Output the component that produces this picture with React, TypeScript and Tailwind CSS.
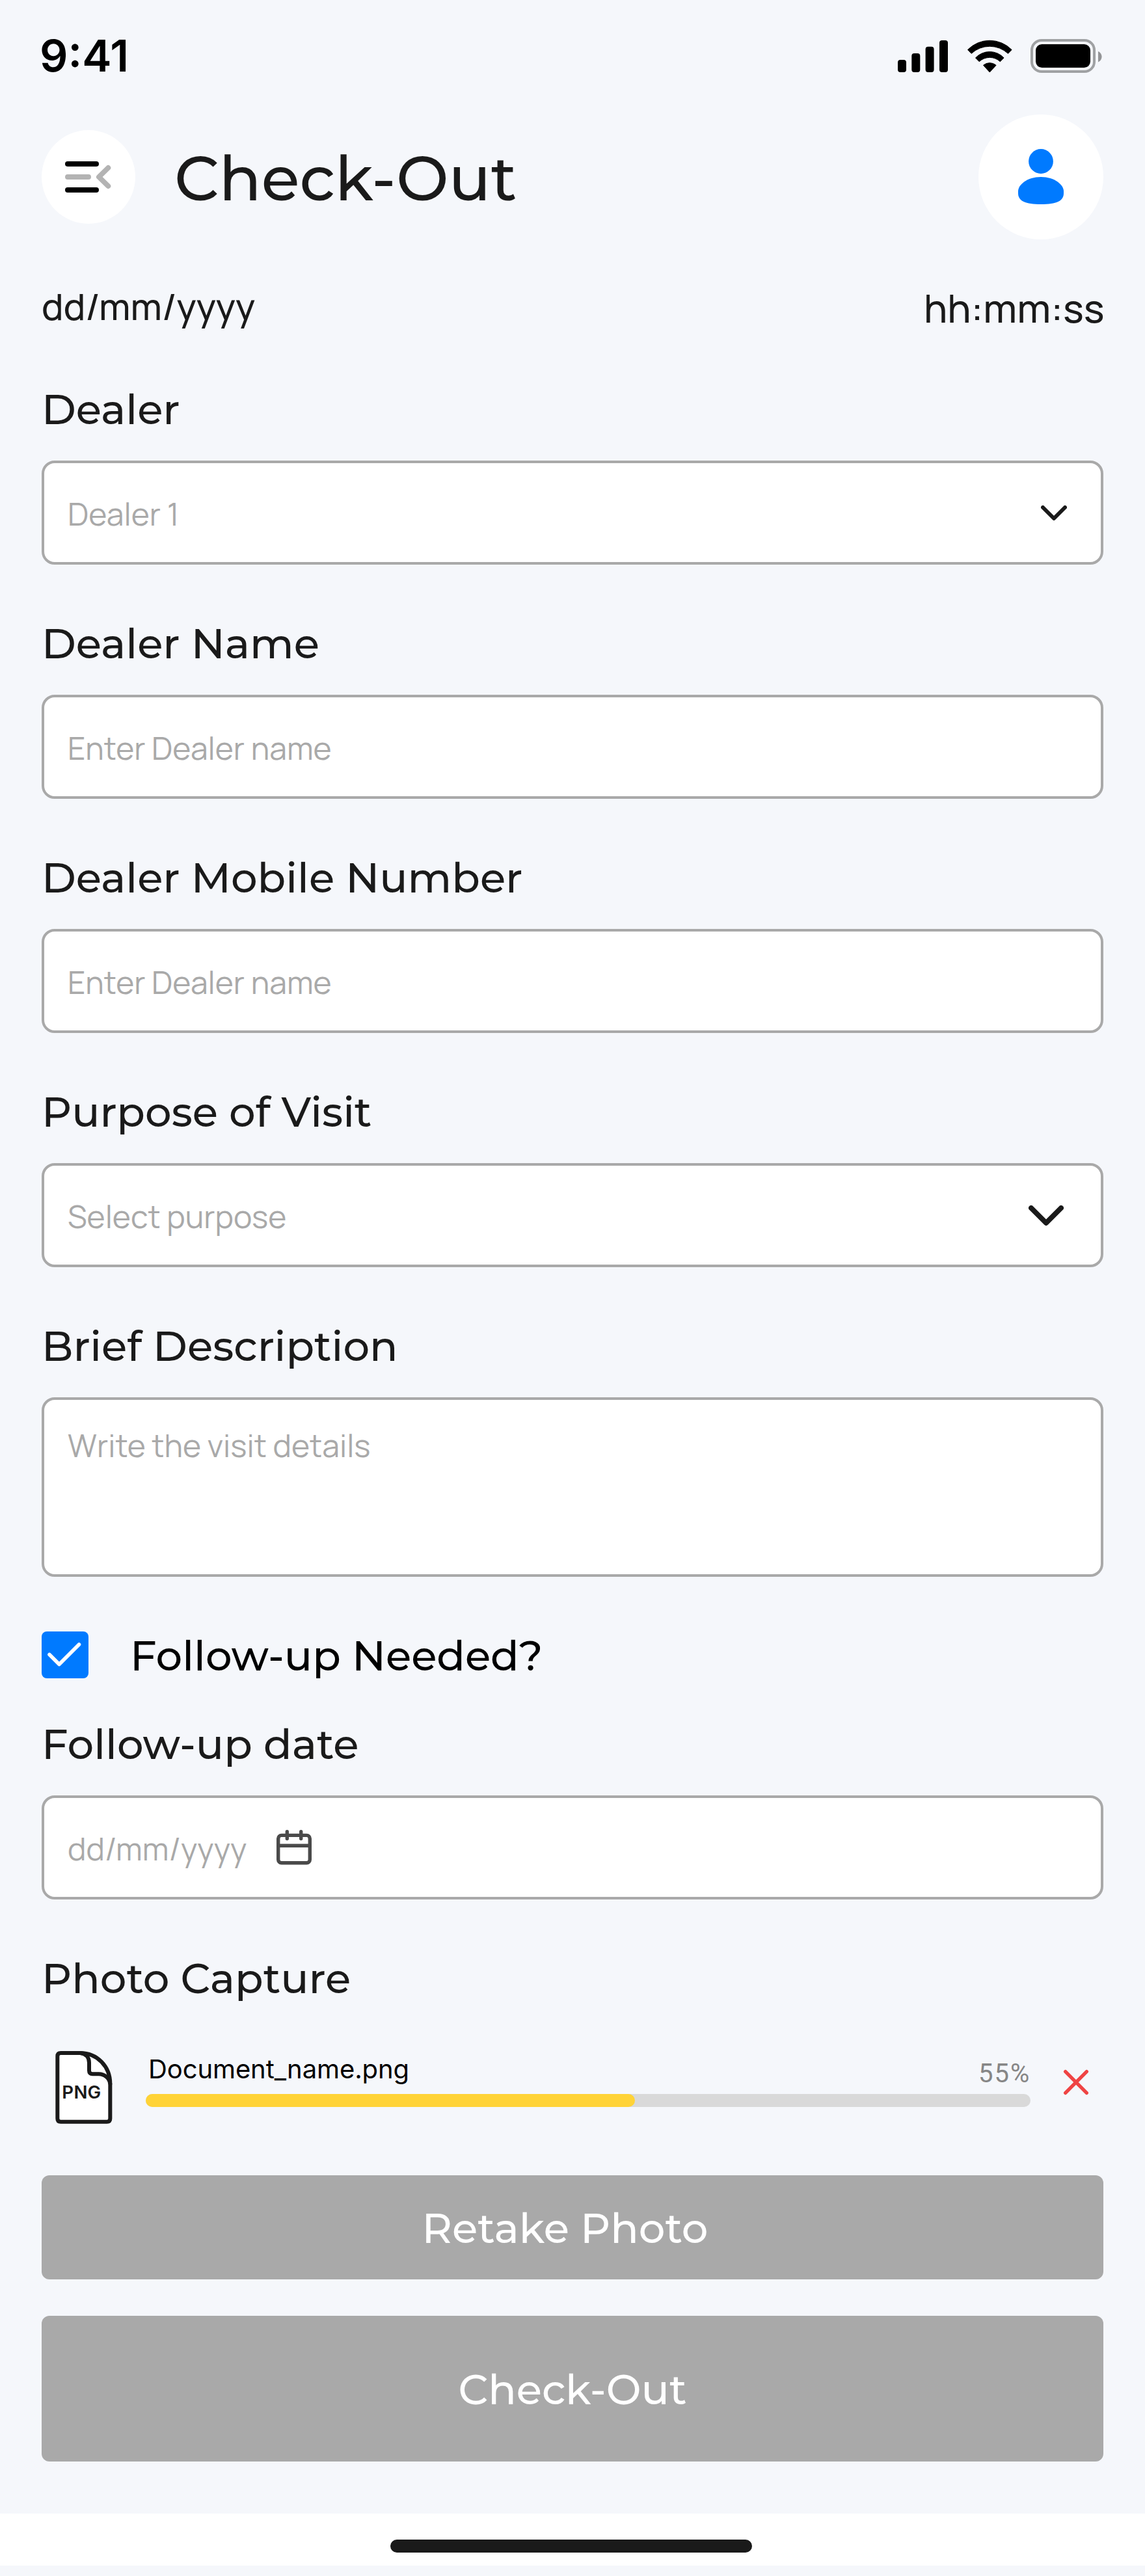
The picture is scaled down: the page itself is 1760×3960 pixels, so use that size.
import type { ReactNode } from "react";

const FONT_MONT = "font-['Montserrat','Inter',sans-serif]";
const FONT_MANROPE = "font-['Manrope','Inter',sans-serif]";

function StatusBar() {
  return (
    <div className="flex h-[176px] items-start justify-between pr-[64px] pl-[61px]">
      <span className="mt-[44px] font-['Inter',sans-serif] text-[68px] leading-[82px] font-semibold text-black">9:41</span>
      <svg className="mt-[60px]" width="316" height="54" viewBox="0 0 316 54">
        <rect x="0" y="32" width="13" height="19" rx="4" />
        <rect x="21.3" y="22" width="13" height="29" rx="4" />
        <rect x="42.6" y="11.7" width="13" height="39.3" rx="4" />
        <rect x="64" y="2" width="13" height="49" rx="4" />
        <g stroke="#000" strokeWidth="1" strokeLinejoin="round">
          <path d="M107.5 16.5A47.3 47.3 0 0 1 175.1 16.5L169.5 22.3A41.5 41.5 0 0 0 113.1 22.3Z" />
          <path d="M119.5 28.9A30 30 0 0 1 163.1 28.9L157.4 34.7A23.6 23.6 0 0 0 125.2 34.7Z" />
          <path d="M131.5 40.3A15 15 0 0 1 151.1 40.3L141.3 51Z" />
        </g>
        <rect x="206" y="2" width="96" height="48" rx="15" fill="none" stroke="#000" strokeOpacity="0.35" strokeWidth="4" />
        <rect x="212" y="8" width="84" height="36" rx="9.5" />
        <path d="M308 19c3.3 1.4 5.5 4.600 5.500 8.200s-2.200 6.800-5.500 8.200z" fillOpacity="0.4" />
      </svg>
    </div>
  );
}

function Header() {
  return (
    <header className="flex h-[192px] items-center">
      <button className="flex size-[144px] items-center justify-center rounded-full bg-white">
        <svg width="72" height="48" viewBox="0 0 72 48" fill="none" strokeWidth="8" strokeLinecap="round" strokeLinejoin="round">
          <path d="M4 4H48M4 44H48" stroke="#000" />
          <path d="M4 24H36M66.300 10L52 24L66.300 38" stroke="#b3b3b3" />
        </svg>
      </button>
      <h1 className={`${FONT_MONT} ml-[60px] pt-[3px] text-[96px] leading-[117px] font-medium text-[#1a1a1a]`}>Check-Out</h1>
      <button className="ml-auto flex size-[192px] items-center justify-center rounded-full bg-white">
        <svg width="70" height="86" viewBox="0 0 70 86" fill="#007aff">
          <circle cx="35" cy="19" r="18.900" />
          <path d="M0 65C0 55 14 43 35 43S70 55 70 65V68C70 80 59 85 35 85S0 80 0 68Z" />
        </svg>
      </button>
    </header>
  );
}

function Label({ children, className = "text-[#1a1a1a]" }: { children: ReactNode; className?: string }) {
  return <div className={`${FONT_MONT} text-[64px] leading-[78px] font-medium ${className}`}>{children}</div>;
}

function Field({ label, placeholder, children, tall = false }: { label: string; placeholder: string; children?: ReactNode; tall?: boolean }) {
  return (
    <div className="flex flex-col gap-[40px]">
      <Label>{label}</Label>
      <div className={`flex items-start rounded-[20px] border-4 border-[#a9a9a9] bg-white pl-[36px] ${tall ? "h-[276px] pt-[37px]" : "h-[160px]"}`}>
        <span className={`${FONT_MANROPE} text-[48px] leading-[65px] font-normal text-[#a9a9a9] ${tall ? "" : "mt-[45px]"}`}>{placeholder}</span>
        {children}
      </div>
    </div>
  );
}

function Upload() {
  return (
    <div className="flex h-[114px] items-start">
      <svg className="ml-[20px] shrink-0" width="90" height="114" viewBox="42 36 270 342">
        <g stroke="#1a1a1a" strokeWidth="18" strokeLinejoin="round" strokeLinecap="round" fill="#fff">
          <path d="M70 48H160C238 48 298 110 298 190V350Q298 365 283 365H70Q55 365 55 350V63Q55 48 70 48Z" />
          <path fill="none" d="M160 48C188 52 201 70 201 92V130C201 140 207 145 216 145H245C272 145 294 164 298 190" />
        </g>
        <text x="76" y="258" className="font-['Inter',sans-serif] text-[83px] font-semibold" fill="#1a1a1a" textLength="180">
          PNG
        </text>
      </svg>
      <div className="ml-[50px] w-[1360px] pt-[4px]">
        <div className="flex h-[63px] items-start justify-between pl-[4px]">
          <span className="font-['Inter',sans-serif] text-[40px] leading-[49px] tracking-[-0.1px] text-black">Document_name.png</span>
          <span className="mt-[8px] w-[80px] font-['Roboto',sans-serif] text-[40px] leading-[47px] tracking-[2px] text-[#868686]">55%</span>
        </div>
        <div className="h-[20px] rounded-full bg-[#d9d9d9]">
          <div className="h-full w-[752px] rounded-full bg-[#ffd337]" />
        </div>
      </div>
      <svg className="mt-[25px] ml-[46px]" width="48" height="48" viewBox="0 0 48 48" stroke="#ef4444" strokeWidth="5.400" strokeLinecap="round">
        <path d="M7.700 7.700L40.300 40.300M40.300 7.700L7.700 40.300" />
      </svg>
    </div>
  );
}

export default function App() {
  return (
    <div className="h-[3960px] w-[1760px] bg-[#f5f7fb]">
      <StatusBar />
      <main className="flex flex-col px-[64px]">
        <Header />
        <div className={`${FONT_MANROPE} mt-[64px] flex h-[82px] items-start justify-between font-medium text-[#1a1a1a]`}>
          <span className="text-[56px] leading-[77px]">dd/mm/yyyy</span>
          <span className="w-[276px] text-[60px] leading-[82px] whitespace-nowrap">hh:mm:ss</span>
        </div>

        <section className="mt-[76px] flex flex-col gap-[82px]">
          <Field label="Dealer" placeholder="Dealer 1">
            <svg className="mt-[65px] mr-[52px] ml-auto" width="40" height="24" viewBox="0 0 40 24" fill="none" stroke="#1a1a1a" strokeWidth="6" strokeLinecap="round" strokeLinejoin="round">
              <path d="M3 3L20 20L37 3" />
            </svg>
          </Field>
          <Field label="Dealer Name" placeholder="Enter Dealer name" />
          <Field label="Dealer Mobile Number" placeholder="Enter Dealer name" />
          <Field label="Purpose of Visit" placeholder="Select purpose">
            <svg className="mt-[61px] mr-[57px] ml-auto" width="54" height="32" viewBox="0 0 54 32" fill="none" stroke="#1a1a1a" strokeWidth="8" strokeLinecap="round" strokeLinejoin="round">
              <path d="M4 4L27 27L50 4" />
            </svg>
          </Field>
          <Field label="Brief Description" placeholder="Write the visit details" tall />
        </section>

        <label className="mt-[82px] flex items-start gap-[64px]">
          <span className="mt-[2px] flex size-[72px] rounded-[8px] bg-[#007aff]">
            <svg width="72" height="72" viewBox="0 0 72 72" fill="none" stroke="#fff" strokeWidth="5.600" strokeLinecap="round" strokeLinejoin="round">
              <path d="M12 35.500L27 50.500L57.500 20" />
            </svg>
          </span>
          <Label className="text-black">Follow-up Needed?</Label>
        </label>

        <section className="mt-[58px] flex flex-col gap-[82px]">
          <Field label="Follow-up date" placeholder="dd/mm/yyyy">
            <svg className="mt-[48px] ml-[45px]" width="56" height="56" viewBox="0 0 56 56" fill="none" stroke="#4a4a4a" strokeWidth="5.400" strokeLinecap="round">
              <rect x="3.700" y="9.400" width="48.600" height="42.400" rx="5" />
              <path d="M4 25.300H52M17.300 3.800V14.500M38.700 3.800V14.500" />
            </svg>
          </Field>
          <Label>Photo Capture</Label>
        </section>

        <div className="mt-[72px]">
          <Upload />
        </div>

        <button className={`${FONT_MONT} mt-[78px] flex h-[160px] items-center justify-center rounded-[12px] bg-[#a9a9a9] pt-[2px] pr-[23px] text-[64px] leading-[78px] font-medium text-white`}>
          Retake Photo
        </button>
        <button className={`${FONT_MONT} mt-[56px] flex h-[224px] items-center justify-center rounded-[12px] bg-[#a9a9a9] pt-[2px] text-[64px] leading-[78px] font-medium text-white`}>
          Check-Out
        </button>
      </main>
      <footer className="mt-[80px] flex h-[80px] items-start justify-center bg-white pt-[40px] pr-[4px]">
        <div className="h-[20px] w-[556px] rounded-full bg-[#1a1a1a]" />
      </footer>
    </div>
  );
}
